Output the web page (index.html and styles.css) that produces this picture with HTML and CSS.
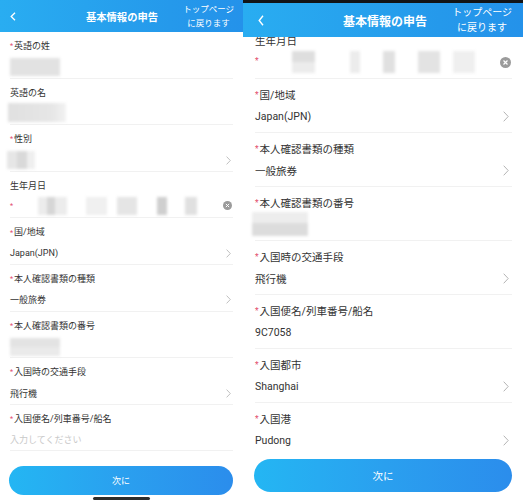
FILE: index.html
```html
<!DOCTYPE html>
<html lang="ja">
<head>
<meta charset="utf-8">
<title>基本情報の申告</title>
<link rel="stylesheet" href="styles.css">
</head>
<body>
<div class="screens">
  <!-- LEFT PHONE -->
  <section class="phone phone-l">
    <header class="bar">
      <svg class="back" width="6" height="9" viewBox="0 0 6 9"><polyline points="5,0.7 1.2,4.5 5,8.3" fill="none" stroke="#fff" stroke-width="1.3"/></svg>
      <h1 class="title">基本情報の申告</h1>
      <div class="top-link">トップページ<br>に戻ります</div>
    </header>
    <div class="content">
      <div class="list">
        <div class="row">
          <div class="label"><span class="req">*</span>英語の姓</div>
          <div class="value"><span class="blur bl-name1"></span></div>
        </div>
        <div class="row">
          <div class="label">英語の名</div>
          <div class="value"><span class="blur bl-name2"></span></div>
        </div>
        <div class="row">
          <div class="label"><span class="req">*</span>性別</div>
          <div class="value"><span class="blur bl-sex"></span><span class="chev"><svg width="5" height="9" viewBox="0 0 5 9"><polyline points="0.6,0.6 4.3,4.5 0.6,8.4" fill="none" stroke="#b9b9b9" stroke-width="0.9"/></svg></span></div>
        </div>
        <div class="row">
          <div class="label">生年月日</div>
          <div class="value"><span class="req">*</span>
            <span class="blur ld1"></span><span class="blur ld2"></span><span class="blur ld3"></span><span class="blur ld4"></span><span class="blur ld5"></span>
            <span class="clear"><svg width="9" height="9" viewBox="0 0 10 10"><circle cx="5" cy="5" r="5" fill="#9b9b9b"/><path d="M3.2 3.2 L6.8 6.8 M6.8 3.2 L3.2 6.8" stroke="#fff" stroke-width="1.1"/></svg></span>
          </div>
        </div>
        <div class="row">
          <div class="label"><span class="req">*</span>国/地域</div>
          <div class="value"><span class="txt">Japan(JPN)</span><span class="chev"><svg width="5" height="9" viewBox="0 0 5 9"><polyline points="0.6,0.6 4.3,4.5 0.6,8.4" fill="none" stroke="#b9b9b9" stroke-width="0.9"/></svg></span></div>
        </div>
        <div class="row">
          <div class="label"><span class="req">*</span>本人確認書類の種類</div>
          <div class="value"><span class="txt">一般旅券</span><span class="chev"><svg width="5" height="9" viewBox="0 0 5 9"><polyline points="0.6,0.6 4.3,4.5 0.6,8.4" fill="none" stroke="#b9b9b9" stroke-width="0.9"/></svg></span></div>
        </div>
        <div class="row">
          <div class="label"><span class="req">*</span>本人確認書類の番号</div>
          <div class="value"><span class="blur bl-num"></span></div>
        </div>
        <div class="row">
          <div class="label"><span class="req">*</span>入国時の交通手段</div>
          <div class="value"><span class="txt">飛行機</span><span class="chev"><svg width="5" height="9" viewBox="0 0 5 9"><polyline points="0.6,0.6 4.3,4.5 0.6,8.4" fill="none" stroke="#b9b9b9" stroke-width="0.9"/></svg></span></div>
        </div>
        <div class="row">
          <div class="label"><span class="req">*</span>入国便名/列車番号/船名</div>
          <div class="value"><span class="txt placeholder">入力してください</span></div>
        </div>
      </div>
    </div>
    <footer class="foot">
      <button class="next">次に</button>
      <div class="home"></div>
    </footer>
  </section>

  <!-- RIGHT PHONE -->
  <section class="phone phone-r">
    <div class="status"></div>
    <header class="bar">
      <svg class="back" width="6" height="11" viewBox="0 0 6 11"><polyline points="5,0.8 1.2,5.5 5,10.2" fill="none" stroke="#fff" stroke-width="1.4"/></svg>
      <h1 class="title">基本情報の申告</h1>
      <div class="top-link">トップページ<br>に戻ります</div>
    </header>
    <div class="content">
      <div class="list">
        <div class="row">
          <div class="label">生年月日</div>
          <div class="value"><span class="req">*</span>
            <span class="blur rd1"></span><span class="blur rd2"></span><span class="blur rd3"></span><span class="blur rd4"></span><span class="blur rd5"></span>
            <span class="clear"><svg width="11" height="11" viewBox="0 0 10 10"><circle cx="5" cy="5" r="5" fill="#9b9b9b"/><path d="M3.2 3.2 L6.8 6.8 M6.8 3.2 L3.2 6.8" stroke="#fff" stroke-width="1.1"/></svg></span>
          </div>
        </div>
        <div class="row">
          <div class="label"><span class="req">*</span>国/地域</div>
          <div class="value"><span class="txt">Japan(JPN)</span><span class="chev"><svg width="6" height="11" viewBox="0 0 6 11"><polyline points="0.7,0.7 5.2,5.5 0.7,10.3" fill="none" stroke="#b4b4b4" stroke-width="1"/></svg></span></div>
        </div>
        <div class="row">
          <div class="label"><span class="req">*</span>本人確認書類の種類</div>
          <div class="value"><span class="txt">一般旅券</span><span class="chev"><svg width="6" height="11" viewBox="0 0 6 11"><polyline points="0.7,0.7 5.2,5.5 0.7,10.3" fill="none" stroke="#b4b4b4" stroke-width="1"/></svg></span></div>
        </div>
        <div class="row">
          <div class="label"><span class="req">*</span>本人確認書類の番号</div>
          <div class="value"><span class="blur br-num"></span></div>
        </div>
        <div class="row">
          <div class="label"><span class="req">*</span>入国時の交通手段</div>
          <div class="value"><span class="txt">飛行機</span><span class="chev"><svg width="6" height="11" viewBox="0 0 6 11"><polyline points="0.7,0.7 5.2,5.5 0.7,10.3" fill="none" stroke="#b4b4b4" stroke-width="1"/></svg></span></div>
        </div>
        <div class="row">
          <div class="label"><span class="req">*</span>入国便名/列車番号/船名</div>
          <div class="value"><span class="txt">9C7058</span></div>
        </div>
        <div class="row">
          <div class="label"><span class="req">*</span>入国都市</div>
          <div class="value"><span class="txt">Shanghai</span><span class="chev"><svg width="6" height="11" viewBox="0 0 6 11"><polyline points="0.7,0.7 5.2,5.5 0.7,10.3" fill="none" stroke="#b4b4b4" stroke-width="1"/></svg></span></div>
        </div>
        <div class="row">
          <div class="label"><span class="req">*</span>入国港</div>
          <div class="value"><span class="txt">Pudong</span><span class="chev"><svg width="6" height="11" viewBox="0 0 6 11"><polyline points="0.7,0.7 5.2,5.5 0.7,10.3" fill="none" stroke="#b4b4b4" stroke-width="1"/></svg></span></div>
        </div>
      </div>
    </div>
    <footer class="foot">
      <button class="next">次に</button>
    </footer>
  </section>
</div>
</body>
</html>
```

FILE: styles.css
```css
* { box-sizing: border-box; }
html, body { margin: 0; padding: 0; background: #fff; }
body {
  font-family: Roboto, "Noto Sans CJK JP", "Noto Sans", sans-serif;
  color: #333;
}
.screens {
  display: flex;
  width: 523px;
  height: 500px;
  overflow: hidden;
}
.phone {
  display: flex;
  flex-direction: column;
  height: 500px;
  background: #fff;
  overflow: hidden;
}
.phone-l { width: 243px; }
.phone-r { width: 280px; }

/* header */
.bar {
  display: grid;
  grid-template-columns: 1fr auto 1fr;
  align-items: center;
  background: linear-gradient(90deg, #29adf1 0%, #2599eb 70%, #2492ea 100%);
  color: #fff;
  position: relative;
  z-index: 2;
  flex: none;
}
.back { justify-self: start; display: block; }
.title { margin: 0; font-weight: 700; white-space: nowrap; }
.top-link { justify-self: end; text-align: center; white-space: nowrap; }

.phone-l .bar { height: 32px; padding: 0 9px 0 10px; }
.phone-l .title { font-size: 10.3px; }
.phone-l .top-link { font-size: 8.5px; line-height: 14px; }

.status { height: 3px; background: #121417; flex: none; }
.phone-r .bar { height: 34px; padding: 0 11px 0 15px; }
.phone-r .title { font-size: 12px; }
.phone-r .top-link { font-size: 10px; line-height: 15.5px; }

/* content */
.content { flex: 1; overflow: hidden; position: relative; }
.row {
  border-bottom: 1px solid #f1f1f1;
  display: flex;
  flex-direction: column;
}
.label { white-space: nowrap; }
.value {
  display: flex;
  align-items: center;
  white-space: nowrap;
}
.txt { flex: none; }
.placeholder { color: #c9c9c9; }
.chev, .clear { margin-left: auto; display: flex; align-items: center; }
.req { color: #e24b6c; font-size: 0.8em; margin-right: 1px; position: relative; top: -0.1em; }

.phone-l .list { padding: 0 10px; }
.phone-l .row { height: 46.6px; padding-top: 7px; }
.phone-l .label { font-size: 9px; line-height: 14px; }
.phone-l .value { font-size: 9px; height: 18px; margin-top: 4px; }
.phone-l .chev { margin-right: 2px; }
.phone-l .clear { margin-right: 1px; }

.phone-r .list { padding: 0 11px 0 12px; margin-top: -12px; }
.phone-r .row { height: 54px; padding-top: 9px; }
.phone-r .label { font-size: 10.5px; line-height: 16px; }
.phone-r .value { font-size: 10.5px; height: 16px; margin-top: 4px; }
.phone-r .chev { margin-right: 3px; }
.phone-r .clear { margin-right: 1px; }

/* blurred personal data */
.blur { display: block; flex: none; background: #e4e4e4; filter: blur(1.4px); }
.bl-name1 { width: 50px; height: 18px; background: #e2e2e2; }
.bl-name2 { width: 58px; height: 19px; margin-left: -2px; background: linear-gradient(90deg, #e0e0e0 0%, #e6e6e6 75%, #f2f2f2 100%); }
.bl-sex { width: 28px; height: 18px; margin-left: -3px; background: linear-gradient(90deg, #e6e6e6 0 35%, #d9d9d9 35% 70%, #efefef 70%); }
.bl-num { width: 50px; height: 18px; background: linear-gradient(180deg, #e3e3e3 0 50%, #eaeaea 50%); }

.ld1 { width: 29px; height: 18px; margin-left: 24px; background: linear-gradient(90deg, #ececec 0 30%, #d6d6d6 30% 60%, #ececec 60%); }
.ld2 { width: 21px; height: 18px; margin-left: 19px; background: #f0f0f0; }
.ld3 { width: 20px; height: 18px; margin-left: 10px; background: #e5e5e5; }
.ld4 { width: 10px; height: 18px; margin-left: 20px; background: #cfcfcf; }
.ld5 { width: 12px; height: 18px; margin-left: 18px; background: #e0e0e0; }

.rd1 { width: 23px; height: 22px; margin-left: 32px; background: linear-gradient(180deg, #dedede 0 50%, #ececec 50%); }
.rd2 { width: 10px; height: 22px; margin-left: 35px; background: #ececec; }
.rd3 { width: 12px; height: 22px; margin-left: 23px; background: #e0e0e0; }
.rd4 { width: 22px; height: 22px; margin-left: 23px; background: #e3e3e3; }
.rd5 { width: 22px; height: 22px; margin-left: 13px; background: #efefef; }
.br-num { width: 56px; height: 24px; margin-left: -3px; background: linear-gradient(180deg, #ededed 0 45%, #dcdcdc 45%); }

/* footer */
.foot { flex: none; background: #fff; position: relative; z-index: 2; }
.next {
  display: block;
  width: 100%;
  border: 0;
  border-radius: 999px;
  background: linear-gradient(90deg, #24b6f3 0%, #2aa0ef 50%, #2b8dec 100%);
  color: #fff;
  font-family: "Noto Sans CJK JP", sans-serif;
  padding: 0;
  cursor: pointer;
}
.phone-l .foot { height: 49px; padding: 15px 10px 0 9px; }
.phone-l .next { height: 29px; font-size: 9px; }
.home { width: 57px; height: 3px; background: #2d2d2d; border-radius: 2px; margin: 2px 0 0 84px; }

.phone-r .foot { height: 52px; padding: 11px 11px 0 11px; }
.phone-r .next { height: 33px; font-size: 10.5px; }
```
